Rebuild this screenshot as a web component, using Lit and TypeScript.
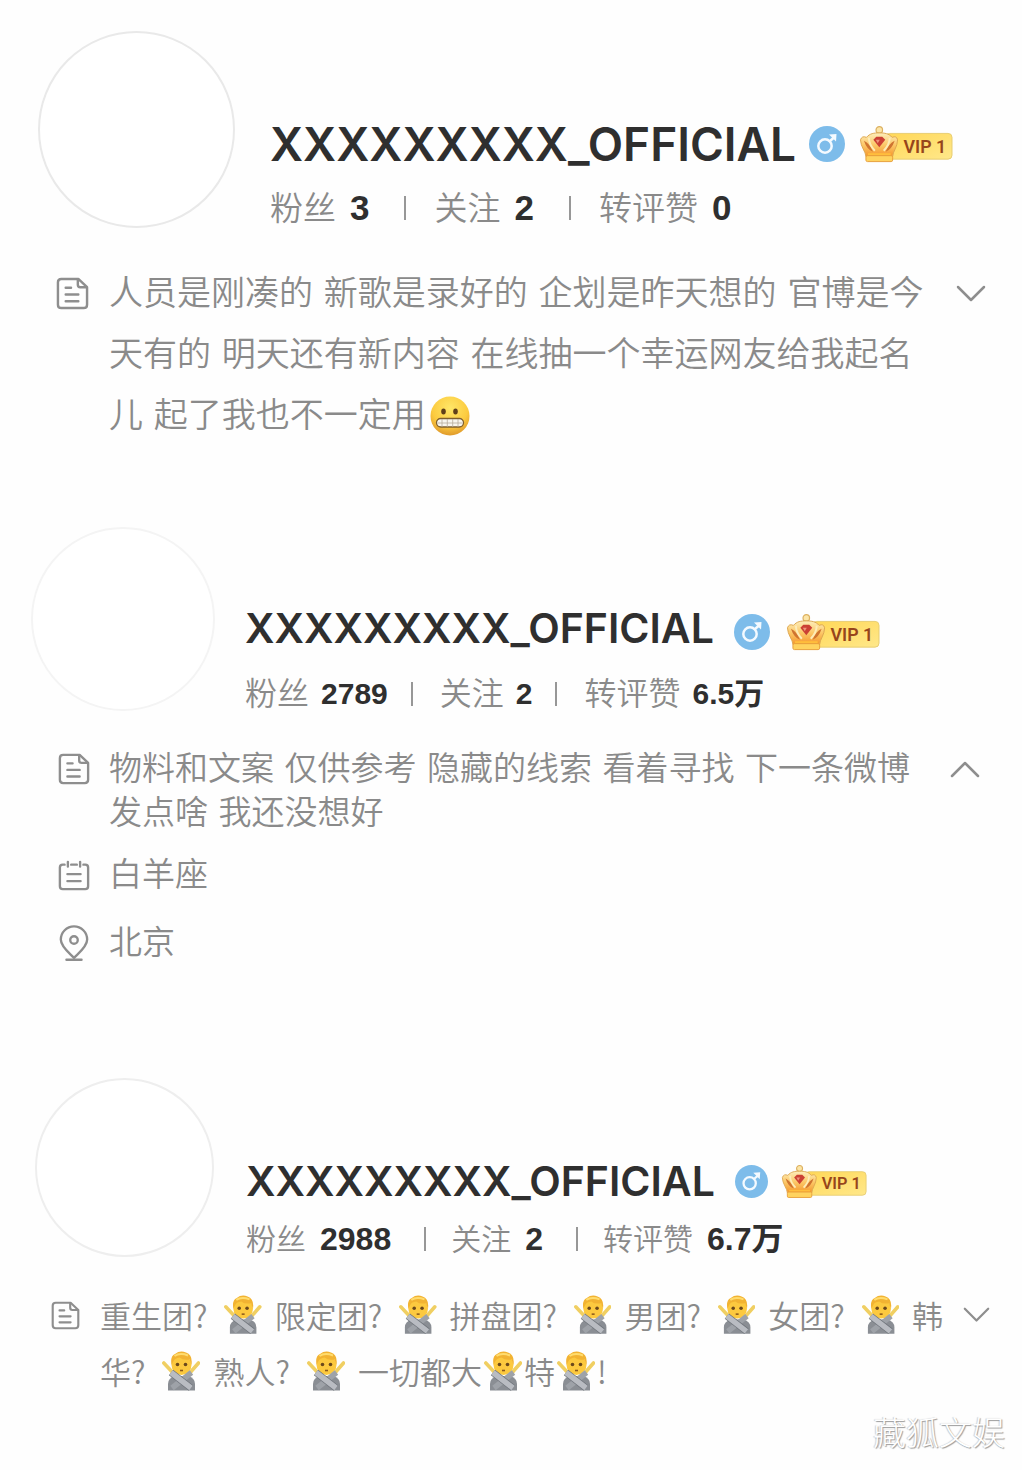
import { LitElement, html, css, svg, nothing } from "lit";
import { customElement, property } from "lit/decorators.js";

type Part = string | { emoji: "grimace" | "no"; tight?: boolean };
interface Stat { label: string; value: string }
interface Profile {
  variant: string;
  name: string;
  stats: Stat[];
  bio: Part[][];
  open: boolean;
  zodiac?: string;
  place?: string;
}

const no: Part = { emoji: "no" };
const noTight: Part = { emoji: "no", tight: true };

const profiles: Profile[] = [
  {
    variant: "large",
    name: "XXXXXXXXX_OFFICIAL",
    stats: [
      { label: "粉丝", value: "3" },
      { label: "关注", value: "2" },
      { label: "转评赞", value: "0" },
    ],
    bio: [
      ["人员是刚凑的 新歌是录好的 企划是昨天想的 官博是今"],
      ["天有的 明天还有新内容 在线抽一个幸运网友给我起名"],
      ["儿 起了我也不一定用", { emoji: "grimace" }],
    ],
    open: false,
  },
  {
    variant: "hand",
    name: "XXXXXXXXX_OFFICIAL",
    stats: [
      { label: "粉丝", value: "2789" },
      { label: "关注", value: "2" },
      { label: "转评赞", value: "6.5万" },
    ],
    bio: [
      ["物料和文案 仅供参考 隐藏的线索 看着寻找 下一条微博"],
      ["发点啥 我还没想好"],
    ],
    open: true,
    zodiac: "白羊座",
    place: "北京",
  },
  {
    variant: "small",
    name: "XXXXXXXXX_OFFICIAL",
    stats: [
      { label: "粉丝", value: "2988" },
      { label: "关注", value: "2" },
      { label: "转评赞", value: "6.7万" },
    ],
    bio: [
      ["重生团?", no, "限定团?", no, "拼盘团?", no, "男团?", no, "女团?", no, "韩"],
      ["华?", no, "熟人?", no, "一切都大", noTight, "特", noTight, "!"],
    ],
    open: false,
  },
];

const noteIcon = html`<svg class="icon" viewBox="0 0 34 34" aria-hidden="true">
  <path d="M23 2H5.500Q2 2 2 5.500V28.500Q2 32 5.500 32H28.500Q32 32 32 28.500V10.500Z" />
  <path d="M22.500 2.500V8Q22.500 10.500 25 10.500H31" />
  <path d="M10 11H15.500M10 18H23M10 25H23" />
</svg>`;

const calendarIcon = html`<svg class="icon" viewBox="0 0 34 34" aria-hidden="true">
  <path d="M7 6H5Q2 6 2 9V29Q2 32 5 32H29Q32 32 32 29V9Q32 6 29 6H27M14 6H20M10.500 3V8M23.500 3V8" />
  <path d="M10 16H24M10 23.500H24" />
</svg>`;

const pinIcon = html`<svg class="icon" viewBox="0 0 34 40" aria-hidden="true">
  <path d="M17 36C13 31.500 3 24.500 3 16.500A14 14 0 0 1 31 16.500C31 24.500 21 31.500 17 36Z" />
  <circle cx="17" cy="17" r="4" />
  <path d="M9 38H25" />
</svg>`;

const maleIcon = html`<svg class="male" viewBox="0 0 36 36" aria-hidden="true">
  <circle cx="18" cy="18" r="18" fill="#7dbcea" />
  <g fill="none" stroke="#f4faff" stroke-width="2.500">
    <circle cx="16" cy="20" r="6.700" />
    <path d="M21 15L25 11.500" />
  </g>
  <path d="M20 8.500L27.500 8L27 15.500Z" fill="#f4faff" />
</svg>`;

const vipBadge = html`<svg class="vip" viewBox="0 0 95 38" aria-hidden="true">
  <defs>
    <linearGradient id="pill" x1="0" x2="1" y1="0" y2="1">
      <stop offset="0" stop-color="#ffd757" />
      <stop offset="1" stop-color="#ffe88a" />
    </linearGradient>
    <linearGradient id="gold" x1="0" x2="0" y1="0" y2="1">
      <stop offset="0" stop-color="#fdeebb" />
      <stop offset=".5" stop-color="#fcc868" />
      <stop offset="1" stop-color="#f5952b" />
    </linearGradient>
  </defs>
  <rect x="27" y="8.500" width="67" height="26" rx="4" fill="url(#pill)" stroke="#e8cd72" />
  <circle cx="20.500" cy="5" r="3.300" fill="#fce5a6" stroke="#dcb060" stroke-width="1.200" />
  <path d="M7 32C7 27 1.500 22 1.500 15Q3 10.500 7.500 12.500C11 8.500 15 8 20.500 8S30 8.500 33.500 12.500Q38 10.500 39 15C39 22 34 27 34 32Z" fill="url(#gold)" stroke="#dda752" />
  <path d="M5 16Q11 19 14 27Q8 25 5 16ZM36 16Q30 19 27 27Q33 25 36 16Z" fill="#cf7430" />
  <path d="M10 13Q10 20 16 26M31 13Q31 20 25 26" fill="none" stroke="#fdecb8" stroke-width="2" />
  <path d="M14.500 15L17.500 12H23.500L26.500 15L20.500 22.500Z" fill="#cb4034" />
  <path d="M17 15H21L19 18.500Z" fill="#ee9379" />
  <path d="M9 29.500H32" fill="none" stroke="#ffbe3c" stroke-width="2" />
  <rect x="7" y="31" width="27" height="6" rx="1.500" fill="#ffd35f" stroke="#e8a03c" />
  <text x="45" y="28" class="vip-text">VIP 1</text>
</svg>`;

const grimace = html`<svg class="grimace" viewBox="0 0 40 40" aria-hidden="true">
  <defs>
    <radialGradient id="face" cx=".5" cy=".3" r=".7">
      <stop offset="0" stop-color="#ffe768" />
      <stop offset=".65" stop-color="#fccb3f" />
      <stop offset="1" stop-color="#e09a2b" />
    </radialGradient>
  </defs>
  <circle cx="20" cy="20" r="19.500" fill="url(#face)" />
  <ellipse cx="13.500" cy="15.500" rx="2.300" ry="2.900" fill="#60401a" />
  <ellipse cx="25.500" cy="15.500" rx="2.300" ry="2.900" fill="#60401a" />
  <rect x="6.500" y="22.500" width="27" height="8.500" rx="4.200" fill="#f7f5ee" stroke="#80602e" stroke-width="1.300" />
  <path d="M8 27H32M12 23V31M17.300 23V31M22.700 23V31M28 23V31" stroke="#b6ab99" stroke-width=".8" />
</svg>`;

const noGesture = (tight?: boolean) => html`<svg class="no ${tight ? "tight" : ""}" viewBox="0 0 38 40" aria-hidden="true">
  <path d="M6 39.500V33Q6 27 13 25H26Q33 27 33 33V39.500Z" fill="#8a8e94" />
  <circle cx="19.500" cy="14" r="10" fill="#fcc93f" />
  <path d="M9.500 14Q8 5 13 3Q18 -1 24 1.500Q31 4 29.500 14L27.500 8.500Q21 9.500 17.500 6.500Q13 7 11.500 10Z" fill="#f2b332" />
  <path d="M12.500 5Q18 1.500 26 4.500" fill="none" stroke="#ffdc6e" stroke-width="2" />
  <circle cx="15.500" cy="13.500" r="1.800" fill="#6b481c" />
  <circle cx="23.500" cy="13.500" r="1.800" fill="#6b481c" />
  <path d="M18 19.500H21" stroke="#8d5a1d" stroke-width="1.600" />
  <path d="M36.500 12L26 24" stroke="#f0cf62" stroke-width="3.600" stroke-linecap="round" />
  <path d="M1.800 12L13 24" stroke="#f0cf62" stroke-width="3.600" stroke-linecap="round" />
  <path d="M29.500 21.500L10 37" stroke="#9ea2a8" stroke-width="5.500" />
  <path d="M9 21.500L29 37" stroke="#6f747b" stroke-width="7" />
  <path d="M9 21.500L29 37" stroke="#b9bcc2" stroke-width="5.500" />
</svg>`;

@customElement("profile-card")
export class ProfileCard extends LitElement {
  @property({ attribute: false }) profile!: Profile;

  static styles = css`
    :host { display: block; }
    .card { font-family: Inter, "Noto Sans CJK SC", sans-serif; color: #8a8a8a; }
    .large {
      --avatar: 197px; --left: 38px; --gap: 35px; --drop: 87px; --name: 46px; --name-gap: 16px;
      --stat: 33px; --value: 35px; --value-gap: 14px; --bar-left: 35px; --bar-right: 28px;
      --badge-gap: 13px; --male: 36px; --vip: 94px; --vip-gap: 14px;
      --bio-top: 33px; --bio: 34px; --bio-line: 61px; --icon-left: 56px; --icon: 33px;
      --text-gap: 20px; --end: 36px; --ring: #e9e9e9;
      padding-top: 31px;
    }
    .hand {
      --avatar: 184px; --left: 31px; --gap: 30px; --drop: 75px; --name: 41px; --name-gap: 18px;
      --stat: 32px; --value: 30px; --value-gap: 12px; --bar-left: 23px; --bar-right: 27px;
      --badge-gap: 20px; --male: 36px; --vip: 94px; --vip-gap: 16px;
      --bio-top: 31px; --bio: 33px; --bio-line: 44px; --icon-left: 58px; --icon: 32px;
      --text-gap: 19px; --end: 42px; --ring: #f4f4f4;
      padding-top: 81px;
    }
    .small {
      --avatar: 179px; --left: 35px; --gap: 32px; --drop: 77px; --name: 41px; --name-gap: 10px;
      --stat: 30px; --value: 32px; --value-gap: 14px; --bar-left: 33px; --bar-right: 25px;
      --badge-gap: 20px; --male: 33px; --vip: 86px; --vip-gap: 13px;
      --bio-top: 26px; --bio: 31px; --bio-line: 56px; --icon-left: 51px; --icon: 29px;
      --text-gap: 20px; --end: 32px; --ring: #eeeeee;
      padding-top: 113px;
    }
    .head { display: flex; align-items: flex-start; gap: var(--gap); padding-left: var(--left); }
    .avatar {
      flex: none; box-sizing: border-box; width: var(--avatar); height: var(--avatar);
      border: 2px solid var(--ring); border-radius: 50%; background: #fff;
    }
    .info { padding-top: var(--drop); white-space: nowrap; }
    .title { display: flex; align-items: center; height: 52px; }
    .name { margin: 0 var(--badge-gap) 0 0; font-size: var(--name); line-height: 52px; font-weight: 600; color: #2f2f2f; }
    .male { flex: none; width: var(--male); height: var(--male); margin-right: var(--vip-gap); }
    .vip { flex: none; width: var(--vip); }
    .hand .male, .hand .vip { margin-top: 8px; }
    .vip-text { font: 600 18px Roboto, sans-serif; fill: #97451b; }
    .stats { display: flex; align-items: center; margin-top: var(--name-gap); height: 44px; line-height: 44px; font-size: var(--stat); }
    .label { margin-right: var(--value-gap); font-weight: 350; }
    .value { font-family: "Liberation Sans", "Noto Sans CJK SC", sans-serif; font-size: var(--value); font-weight: 600; color: #2f2f2f; }
    .bar { width: 2px; height: 24px; margin: 0 var(--bar-right) 0 var(--bar-left); background: #979797; }
    .row { display: flex; align-items: flex-start; padding: 0 var(--end) 0 var(--icon-left); gap: var(--text-gap); }
    .bio { margin-top: var(--bio-top); }
    .zodiac { margin-top: 18px; }
    .place { margin-top: 24px; }
    .slot { flex: none; display: flex; align-items: center; width: var(--icon); height: var(--bio-line); }
    .icon { width: 100%; fill: none; stroke: #8e8e8e; stroke-width: 2.5; stroke-linecap: round; stroke-linejoin: round; }
    .text {
      flex: 1; min-width: 0; margin: 0; font-family: "DejaVu Sans", "Noto Sans CJK SC", sans-serif; font-weight: 350;
      font-size: var(--bio); line-height: var(--bio-line); white-space: nowrap;
    }
    .small .text { font-family: "Noto Sans CJK SC", sans-serif; }
    .line { display: flex; align-items: center; height: var(--bio-line); white-space: pre; }
    .toggle {
      flex: none; display: flex; align-items: center; height: var(--bio-line); width: 30px;
      padding: 0; border: 0; background: none; cursor: pointer;
    }
    .chevron { width: 30px; fill: none; stroke: #8e8e8e; stroke-width: 2.5; stroke-linecap: round; stroke-linejoin: round; }
    .small .toggle, .small .chevron { width: 27px; }
    .grimace { width: 40px; margin-left: 4px; }
    .no { width: 38px; margin: 0 13px 0 17px; }
    .tight { margin: 0 2px; }
  `;

  private part(part: Part) {
    if (typeof part === "string") return html`<span>${part}</span>`;
    return part.emoji === "grimace" ? grimace : noGesture(part.tight);
  }

  render() {
    const p = this.profile;
    return html`<section class="card ${p.variant}">
      <header class="head">
        <div class="avatar"></div>
        <div class="info">
          <div class="title"><h2 class="name">${p.name}</h2>${maleIcon}${vipBadge}</div>
          <div class="stats">
            ${p.stats.map((s, i) => html`${i ? html`<span class="bar"></span>` : nothing}<span class="label">${s.label}</span><span class="value">${s.value}</span>`)}
          </div>
        </div>
      </header>
      <div class="row bio">
        <span class="slot">${noteIcon}</span>
        <div class="text">${p.bio.map((line) => html`<div class="line">${line.map((x) => this.part(x))}</div>`)}</div>
        <button class="toggle" type="button" aria-label=${p.open ? "收起" : "展开"} aria-expanded=${p.open ? "true" : "false"}>
          <svg class="chevron" viewBox="0 0 30 18" aria-hidden="true">
            ${p.open ? svg`<path d="M2 16L15 3L28 16" />` : svg`<path d="M2 2L15 15L28 2" />`}
          </svg>
        </button>
      </div>
      ${p.zodiac ? html`<div class="row zodiac"><span class="slot">${calendarIcon}</span><div class="text">${p.zodiac}</div></div>` : nothing}
      ${p.place ? html`<div class="row place"><span class="slot">${pinIcon}</span><div class="text">${p.place}</div></div>` : nothing}
    </section>`;
  }
}

@customElement("app-root")
export class AppRoot extends LitElement {
  static styles = css`
    :host { display: block; background: #fefefe; overflow: hidden; }
    .credit {
      margin: 0; padding: 12px 17px 19px; text-align: right;
      font: 300 33px/40px "Noto Sans CJK SC", sans-serif;
      color: #fff; text-shadow: 1px 1px 1px #9a9a9a, -1px 0 1px #cccccc;
    }
  `;

  render() {
    return html`<main>
      ${profiles.map((p) => html`<profile-card .profile=${p}></profile-card>`)}
      <p class="credit">藏狐文娱</p>
    </main>`;
  }
}
